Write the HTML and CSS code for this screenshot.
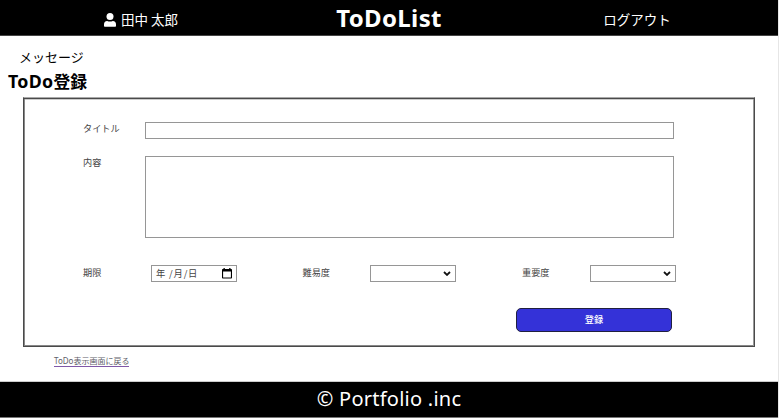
FILE: index.html
```html
<!DOCTYPE html>
<html lang="ja">
<head>
<meta charset="utf-8">
<title>ToDoList</title>
<link rel="stylesheet" href="styles.css">
</head>
<body>
<div class="page">
  <header class="header">
    <div class="user">
      <svg class="user-icon" viewBox="0 0 12 14"><circle cx="6" cy="3.5" r="3.5"/><path d="M0 13v-1.500Q0 8 3.200 8Q6 9 8.800 8Q12 8 12 11.500V13Q12 13.800 11.200 13.800H.8Q0 13.800 0 13Z"/></svg>
      <span class="user-name">田中 太郎</span>
    </div>
    <h1 class="brand"><span class="brand-text">ToDoList</span></h1>
    <a class="logout"><span>ログアウト</span></a>
  </header>
  <main class="main">
    <p class="message">メッセージ</p>
    <h2 class="heading"><span class="heading-latin">ToDo</span>登録</h2>
    <form class="panel">
      <div class="row row-title">
        <label class="label" for="title">タイトル</label>
        <input class="control" id="title" type="text">
      </div>
      <div class="row row-content">
        <label class="label" for="content">内容</label>
        <textarea class="control" id="content"></textarea>
      </div>
      <div class="options">
        <span class="label">期限</span>
        <div class="picker date"><span class="date-text"><span>年</span><span>/月/日</span></span>
          <svg class="calendar" viewBox="0 0 10 11"><path fill-rule="evenodd" d="M1.500 0H2.800V1H7.200V0H8.500V1H9.200Q10 1 10 1.800V9.700Q10 10.500 9.200 10.500H.8Q0 10.500 0 9.700V1.800Q0 1 .8 1H1.500ZM1.100 3.500V9.400H8.900V3.500Z"/></svg>
        </div>
        <span class="label">難易度</span>
        <div class="picker"><svg class="chevron" viewBox="0 0 8 5"><path d="M1 1L4 3.900L7 1"/></svg></div>
        <span class="label">重要度</span>
        <div class="picker"><svg class="chevron" viewBox="0 0 8 5"><path d="M1 1L4 3.900L7 1"/></svg></div>
      </div>
      <button class="submit" type="button">登録</button>
    </form>
    <a class="back">ToDo表示画面に戻る</a>
  </main>
  <footer class="footer"><span class="copyright">© Portfolio .inc</span></footer>
</div>
</body>
</html>
```
FILE: styles.css
```css
* { box-sizing: border-box; }
body {
  margin: 0;
  background: #fff;
  color: #000;
  font-family: "Noto Sans", "Noto Sans CJK JP", sans-serif;
}
.page {
  width: 779px;
  height: 418px;
  border-right: 1px solid #e6e6e6;
  display: flex;
  flex-direction: column;
}
.header {
  height: 36px;
  flex: none;
  display: grid;
  grid-template-columns: 282px 214px 282px;
  background: #000;
  border-bottom: 1px solid #444;
  color: #fff;
  font-family: "Noto Sans CJK JP", sans-serif;
  font-size: 13.5px;
  line-height: 20px;
  padding-top: 9px;
}
.user { display: flex; justify-content: center; gap: 5px; }
.user-icon { width: 12px; height: 14px; margin-top: 4px; fill: #fff; }
.brand {
  margin: -2px 0 0;
  text-align: center;
  font: bold 24px/22px "Noto Sans", sans-serif;
  letter-spacing: .35px;
}
.logout { text-align: center; }
.main { height: 345px; flex: none; }
.message {
  margin: 11px 0 0 19px;
  font: 13px/20px "Noto Sans CJK JP", sans-serif;
}
.heading {
  margin: 2px 0 0 8px;
  height: 28px;
  font: bold 16.8px/24px "Noto Sans CJK JP", sans-serif;
}
.heading-latin { font-family: "Noto Sans", sans-serif; font-size: 17.8px; letter-spacing: .3px; }
.panel {
  width: 732px;
  height: 250px;
  margin-left: 23px;
  padding: 24px 0 0 59px;
  border: 1px solid #4a4a4a;
  border-top-color: #aaa;
  box-shadow: inset 0 1px #4a4a4a, inset -1px 0 #999, inset 1px 0 #888, inset 0 -1px #888, inset 0 2px #ccc;
}
.row { display: flex; }
.label {
  width: 62px;
  flex: none;
  color: #444;
  font: 9.2px/14px "Noto Sans CJK JP", sans-serif;
}
.row .label { margin-top: -1px; }
.control {
  display: block;
  width: 529px;
  margin: 0;
  padding: 2px;
  border: 1px solid #969696;
  border-radius: 0;
  outline: 0;
  background: #fff;
  resize: none;
}
.row-title { height: 34px; }
.row-title .control { height: 17px; }
.row-content { height: 109px; }
.row-content .control { height: 82px; }
.options {
  display: grid;
  grid-template-columns: 68px 151.500px 67.500px 152px 67.500px 86px;
  height: 43px;
}
.picker {
  width: 86px;
  height: 17px;
  border: 1px solid #969696;
  display: flex;
  align-items: center;
  justify-content: flex-end;
  padding-right: 4px;
}
.date { justify-content: space-between; padding-left: 4px; padding-right: 4px; }
.date-text { display: flex; gap: 3px; margin-top: -1px; color: #444; font: 9.3px/14px "Noto Sans CJK JP", sans-serif; letter-spacing: .8px; }
.calendar { width: 10px; height: 11px; }
.chevron { width: 8px; height: 5px; fill: none; stroke: #111; stroke-width: 1.8; }
.submit {
  display: block;
  width: 156px;
  height: 24px;
  margin-left: 433px;
  padding: 0 0 2px;
  border: 1px solid #202040;
  border-radius: 5px;
  background: #3432d8;
  color: #fff;
  font: 500 9.2px/14px "Noto Sans CJK JP", sans-serif;
}
.back {
  display: block;
  width: max-content;
  margin: 8px 0 0 54px;
  border-bottom: 1px solid #8058a8;
  color: #606068;
  font: 8px/11px "Noto Sans", "Noto Sans CJK JP", sans-serif;
}
.footer {
  height: 37px;
  flex: none;
  background: #000;
  border-top: 1px solid #ccc;
  border-bottom: 1px solid #777;
  color: #fff;
  text-align: center;
  font: 20px/33px "Noto Sans", sans-serif;
  letter-spacing: .25px;
}
```
